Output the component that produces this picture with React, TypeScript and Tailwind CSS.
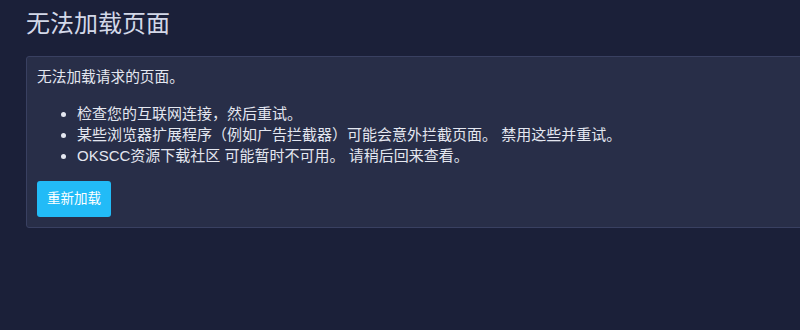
const items = [
  "检查您的互联网连接，然后重试。",
  "某些浏览器扩展程序（例如广告拦截器）可能会意外拦截页面。 禁用这些并重试。",
  "OKSCC资源下载社区 可能暂时不可用。 请稍后回来查看。",
];

export default function App() {
  return (
    <div
      className="h-[330px] w-[800px] overflow-hidden bg-[#1b2039] pl-[26px] text-[#e4e7f0]"
      style={{ fontFamily: '"Liberation Sans", "Noto Sans CJK SC", sans-serif' }}
    >
      <h1 className="pt-[9px] text-[24px] leading-[30px] text-[#d3d8e8]">无法加载页面</h1>
      <div className="mt-[17px] w-[800px] rounded-[3px] border border-[#394061] bg-[#282e48] px-[10px] pt-[10px] pb-[10px]">
        <p className="text-[14.7px] leading-[20px]">无法加载请求的页面。</p>
        <ul className="mt-[16px] list-disc pl-[40px] text-[15px] leading-[21px]">
          {items.map((t) => (
            <li key={t}>{t}</li>
          ))}
        </ul>
        <button className="mt-[15px] h-[36px] rounded-[3px] bg-[#22bbf7] px-[10px] text-[13.5px] text-white">
          重新加载
        </button>
      </div>
    </div>
  );
}
